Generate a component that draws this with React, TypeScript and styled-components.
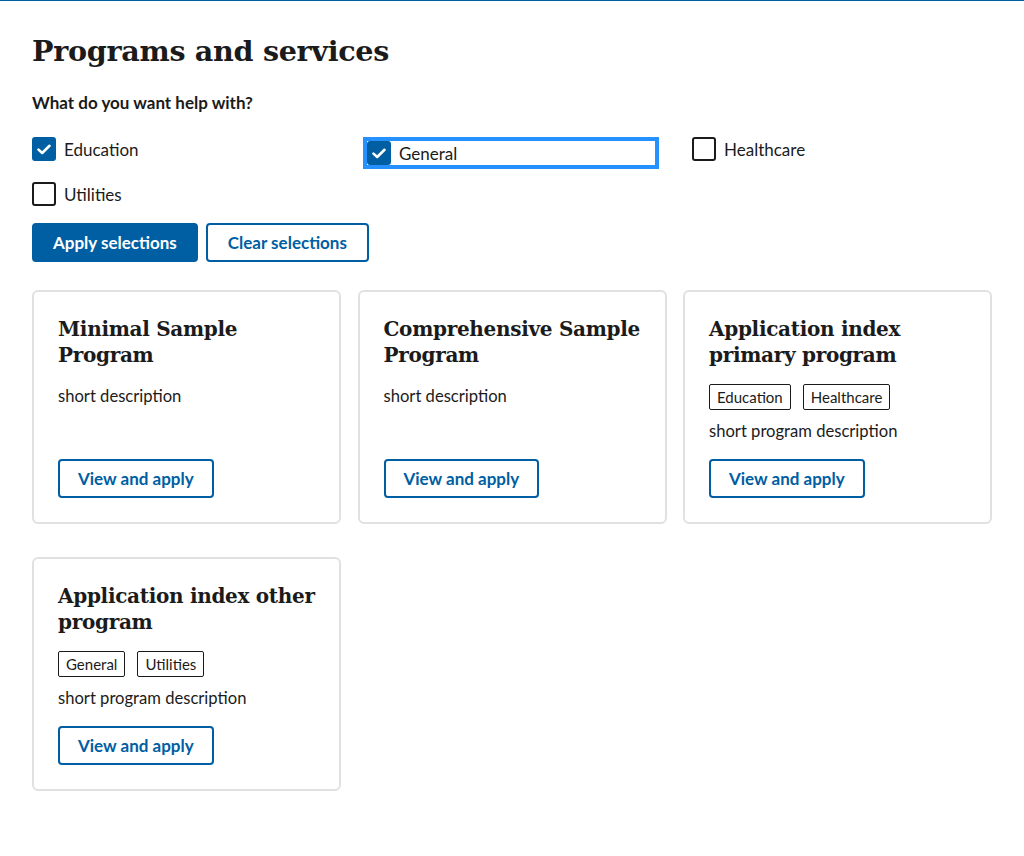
import styled, { createGlobalStyle, css } from 'styled-components';

const GlobalStyle = createGlobalStyle`
  body {
    margin: 0;
    background: #fff;
    color: #1b1b1b;
    font-family: Lato, 'Liberation Sans', sans-serif;
    border-top: 1px solid #005ea2;
  }
  * { box-sizing: border-box; }
`;

type Program = {
  title: string;
  description: string;
  tags: string[];
};

const programs: Program[] = [
  { title: 'Minimal Sample Program', description: 'short description', tags: [] },
  { title: 'Comprehensive Sample Program', description: 'short description', tags: [] },
  {
    title: 'Application index primary program',
    description: 'short program description',
    tags: ['Education', 'Healthcare'],
  },
  {
    title: 'Application index other program',
    description: 'short program description',
    tags: ['General', 'Utilities'],
  },
];

const filters = [
  { label: 'Education', checked: true, focused: false },
  { label: 'General', checked: true, focused: true },
  { label: 'Healthcare', checked: false, focused: false },
  { label: 'Utilities', checked: false, focused: false },
];

function CheckMark() {
  return (
    <svg width="14" height="11" viewBox="0 0 14 11" fill="none">
      <path d="M1.5 5.6 L5.2 9 L12.5 1.8" stroke="#fff" strokeWidth="2.6" strokeLinecap="round" strokeLinejoin="round" />
    </svg>
  );
}

export default function App() {
  return (
    <>
      <GlobalStyle />
      <Main>
        <Title>Programs and services</Title>
        <Legend>What do you want help with?</Legend>
        <FilterGrid>
          {filters.map((f) => (
            <FilterItem key={f.label} $focused={f.focused}>
              <Box $checked={f.checked}>{f.checked && <CheckMark />}</Box>
              <span>{f.label}</span>
            </FilterItem>
          ))}
        </FilterGrid>
        <ButtonRow>
          <Button $primary $pad={19}>Apply selections</Button>
          <Button $pad={20}>Clear selections</Button>
        </ButtonRow>
        <CardGrid>
          {programs.map((p) => (
            <Card key={p.title}>
              <CardTitle>{p.title}</CardTitle>
              {p.tags.length > 0 && (
                <Tags>
                  {p.tags.map((t) => (
                    <Tag key={t}>{t}</Tag>
                  ))}
                </Tags>
              )}
              <Description>{p.description}</Description>
              <Button>View and apply</Button>
            </Card>
          ))}
        </CardGrid>
      </Main>
    </>
  );
}

const Main = styled.main`
  padding: 33px 32px 32px;
  width: 1024px;
`;

const Title = styled.h1`
  font-family: 'DejaVu Serif', serif;
  font-weight: 700;
  font-size: 28.6px;
  line-height: 1.2;
  margin: 0 0 24px;
  letter-spacing: -0.3px;
`;

const Legend = styled.div`
  font-weight: 700;
  font-size: 17px;
  line-height: 1.3;
  margin-bottom: 23px;
`;

const FilterGrid = styled.div`
  display: grid;
  grid-template-columns: repeat(3, 298px);
  column-gap: 32px;
  row-gap: 21px;
  margin-bottom: 17px;
`;

const FilterItem = styled.label<{ $focused: boolean }>`
  display: flex;
  align-items: center;
  gap: 8px;
  height: 24px;
  font-size: 17px;
  ${(p) =>
    p.$focused &&
    css`
      margin: 4px 0 -4px 5px;
      width: 288px;
      outline: 4px solid #2491ff;
      outline-offset: 0;
    `}
`;

const Box = styled.span<{ $checked: boolean }>`
  width: 24px;
  height: 24px;
  border-radius: 3px;
  flex: none;
  display: flex;
  align-items: center;
  justify-content: center;
  background: ${(p) => (p.$checked ? '#005ea2' : '#fff')};
  border: 2px solid ${(p) => (p.$checked ? '#005ea2' : '#1b1b1b')};
`;

const ButtonRow = styled.div`
  display: flex;
  gap: 8px;
  margin-bottom: 28px;
`;

const Button = styled.button<{ $primary?: boolean; $pad?: number }>`
  font-family: Lato, 'Liberation Sans', sans-serif;
  font-weight: 700;
  font-size: 17px;
  height: 39px;
  padding: 0 ${(p) => p.$pad ?? 18}px;
  border-radius: 4px;
  cursor: pointer;
  align-self: flex-start;
  color: ${(p) => (p.$primary ? '#fff' : '#005ea2')};
  background: ${(p) => (p.$primary ? '#005ea2' : '#fff')};
  border: 2px solid #005ea2;
`;

const CardGrid = styled.div`
  display: grid;
  grid-template-columns: repeat(3, 309px);
  column-gap: 16.5px;
  row-gap: 33px;
`;

const Card = styled.div`
  display: flex;
  flex-direction: column;
  border: 2px solid #dfe1e2;
  border-radius: 6px;
  padding: 24px;
`;

const CardTitle = styled.h2`
  font-family: 'DejaVu Serif', serif;
  font-weight: 700;
  font-size: 20px;
  line-height: 26px;
  margin: 0 0 16px;
  letter-spacing: -0.3px;
`;

const Tags = styled.div`
  display: flex;
  gap: 12px;
  margin-bottom: 9px;
`;

const Tag = styled.span`
  border: 1px solid #1b1b1b;
  border-radius: 2px;
  font-size: 15px;
  height: 26px;
  padding: 0 7px;
  display: flex;
  align-items: center;
`;

const Description = styled.p`
  flex: 1;
  margin: 0 0 16px;
  font-size: 16.6px;
  line-height: 24px;
`;
